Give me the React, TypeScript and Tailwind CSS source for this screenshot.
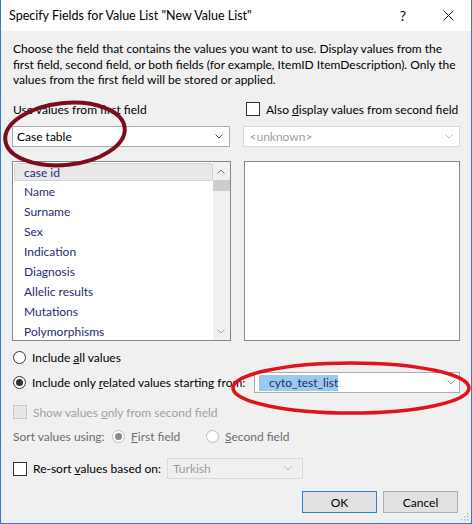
import React from 'react';

const Chevron = ({ className = '' }: { className?: string }) => (
  <svg className={className} width="8" height="5" viewBox="0 0 8 5" fill="none">
    <polyline points="0.5,0.5 4,4 7.5,0.5" stroke="currentColor" strokeWidth="1" />
  </svg>
);

const ChevronUp = ({ className = '' }: { className?: string }) => (
  <svg className={className} width="8" height="5" viewBox="0 0 8 5" fill="none">
    <polyline points="0.5,4.5 4,1 7.5,4.5" stroke="currentColor" strokeWidth="1" />
  </svg>
);

const Radio = ({ checked = false, disabled = false }: { checked?: boolean; disabled?: boolean }) => (
  <span
    className={`flex h-[13px] w-[13px] shrink-0 items-center justify-center rounded-full border bg-white ${
      disabled ? 'border-[#bcbcbc]' : 'border-[#333333]'
    }`}
  >
    {checked && (
      <span className={`h-[7px] w-[7px] rounded-full ${disabled ? 'bg-[#8a8a8a]' : 'bg-[#333333]'}`} />
    )}
  </span>
);

const Check = ({ disabled = false }: { disabled?: boolean }) => (
  <span
    className={`h-[14px] w-[14px] shrink-0 border ${
      disabled ? 'border-[#c8c8c8] bg-[#e6e6e6]' : 'border-[#333333] bg-white'
    }`}
  />
);

const items = [
  'Name',
  'Surname',
  'Sex',
  'Indication',
  'Diagnosis',
  'Allelic results',
  'Mutations',
  'Polymorphisms',
];

export default function App() {
  return (
    <div className="relative flex h-[524px] w-[472px] flex-col overflow-hidden whitespace-nowrap border-x border-b border-[#2b7fd0] bg-[#f0f0f0] font-['Lato','Noto_Sans',sans-serif] text-[12px] leading-[15px] text-black">
      {/* title bar */}
      <div className="flex h-[31px] shrink-0 items-center bg-white pl-[8px]">
        <span className="flex-1 text-[12.5px]">Specify Fields for Value List "New Value List"</span>
        <span className="mr-[12px] w-[20px] text-center text-[14px]">?</span>
        <span className="flex w-[46px] items-center justify-center">
          <svg width="11" height="11" viewBox="0 0 11 11">
            <path d="M0.5 0.5 L10.5 10.5 M10.5 0.5 L0.5 10.5" stroke="#222" strokeWidth="1" />
          </svg>
        </span>
      </div>

      <div className="flex flex-1 flex-col px-[11px]">
        <p className="mt-[10px] h-[45px] pl-[1px] leading-[15.5px]">
          Choose the field that contains the values you want to use. Display values from the
          <br />
          first field, second field, or both fields (for example, ItemID ItemDescription). Only the
          <br />
          values from the first field will be stored or applied.
        </p>

        <div className="mt-[16px] flex h-[14px] items-center gap-[13px]">
          <div className="w-[220px] pl-[1px]">Use values from first field</div>
          <div className="flex items-center gap-[6px] pl-[1px]">
            <Check />
            <span>
              Also <u>d</u>isplay values from second field
            </span>
          </div>
        </div>

        <div className="mt-[10px] flex h-[21px] gap-[13px]">
          <div className="flex w-[220px] items-center justify-between border border-[#acacac] bg-white pl-[4px] pr-[6px]">
            <span>Case table</span>
            <Chevron className="text-[#555]" />
          </div>
          <div className="flex w-[218px] items-center justify-between border border-[#d9d9d9] bg-white pl-[5px] pr-[6px] text-[#a0a0a0]">
            <span>&lt;unknown&gt;</span>
            <Chevron className="text-[#bbb]" />
          </div>
        </div>

        <div className="mt-[14px] flex h-[180px] gap-[13px]">
          <div className="flex w-[220px] border border-[#828790] bg-white">
            <div className="flex flex-1 flex-col pl-[1px] pt-[1px] text-[#1f2c6b]">
              <div className="flex h-[18px] shrink-0 items-center rounded-[2px] border border-[#d2d2d2] bg-[#e8e8e8] pl-[9px]">
                case id
              </div>
              {items.map((t) => (
                <div key={t} className="flex h-[20px] shrink-0 items-center pl-[10px] first:mt-[1px]">
                  {t}
                </div>
              ))}
            </div>
            <div className="flex w-[17px] flex-col items-center bg-[#f0f0f0]">
              <div className="flex h-[18px] items-center">
                <ChevronUp className="text-[#777]" />
              </div>
              <div className="h-[11px] w-full bg-[#cdcdcd]" />
              <div className="flex-1" />
              <div className="flex h-[18px] items-center">
                <Chevron className="text-[#aaa]" />
              </div>
            </div>
          </div>
          <div className="w-[218px] border border-[#828790] bg-white" />
        </div>

        <div className="mt-[9px] flex h-[14px] items-center gap-[6px] pl-[1px]">
          <Radio />
          <span>
            Include <u>a</u>ll values
          </span>
        </div>

        <div className="mt-[8px] flex h-[21px] items-center pl-[1px]">
          <Radio checked />
          <span className="ml-[6px] w-[222px]">
            Include only <u>r</u>elated values starting from:
          </span>
          <div className="flex h-[21px] flex-1 items-center justify-between border border-[#acacac] bg-white pl-[4px] pr-[4px]">
            <span className="bg-[#99c9ef] pl-[10px] leading-[16px] text-[#1f2c6b]">cyto_test_list</span>
            <Chevron className="text-[#999]" />
          </div>
        </div>

        <div className="mt-[12px] flex h-[14px] items-center gap-[6px] pl-[1px] text-[#a0a0a0]">
          <Check disabled />
          <span>
            Show values <u>o</u>nly from second field
          </span>
        </div>

        <div className="mt-[10px] flex h-[14px] items-center pl-[1px] text-[#6d6d6d]">
          <span className="w-[99px]">Sort values using:</span>
          <Radio checked disabled />
          <span className="ml-[6px] w-[75px]">
            <u>F</u>irst field
          </span>
          <Radio disabled />
          <span className="ml-[6px]">
            <u>S</u>econd field
          </span>
        </div>

        <div className="mt-[15px] flex h-[21px] items-center pl-[1px]">
          <Check />
          <span className="ml-[6px] w-[134px]">
            Re-sort <u>v</u>alues based on:
          </span>
          <div className="flex h-[21px] w-[136px] items-center justify-between border border-[#d9d9d9] bg-[#f0f0f0] pl-[5px] pr-[10px] text-[#9a9a9a]">
            <span>Turkish</span>
            <Chevron className="text-[#bbb]" />
          </div>
        </div>

        <div className="mt-[12px] flex justify-end gap-[6px] pr-[2px]">
          <button className="h-[22px] w-[75px] border border-[#2b7fd0] bg-[#e1e1e1]">OK</button>
          <button className="h-[22px] w-[75px] border border-[#adadad] bg-[#e1e1e1]">Cancel</button>
        </div>
      </div>

      {/* resize grip */}
      <svg className="absolute bottom-[2px] right-[2px]" width="10" height="10" viewBox="0 0 10 10">
        {[
          [8, 2],
          [8, 5],
          [5, 5],
          [8, 8],
          [5, 8],
          [2, 8],
        ].map(([x, y]) => (
          <rect key={`${x}-${y}`} x={x} y={y} width="1.5" height="1.5" fill="#b8b8b8" />
        ))}
      </svg>

      {/* annotation ellipses */}
      <svg className="pointer-events-none absolute left-0 top-0" width="472" height="524">
        <ellipse
          cx="64"
          cy="134"
          rx="60"
          ry="31"
          transform="rotate(-6 64 134)"
          fill="none"
          stroke="#7d0c1f"
          strokeWidth="4"
        />
        <ellipse cx="350" cy="388" rx="118" ry="25" fill="none" stroke="#e2121b" strokeWidth="3.5" />
      </svg>
    </div>
  );
}
